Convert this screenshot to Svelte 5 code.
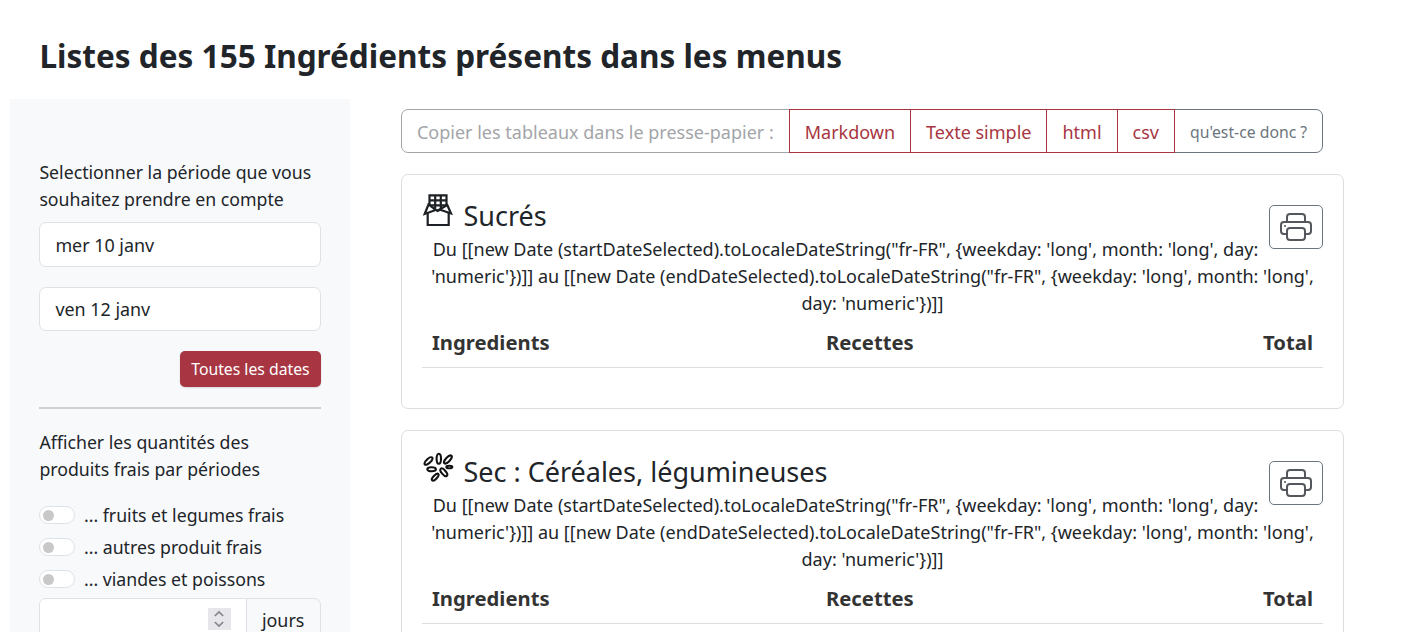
<script>
  const formats = ['Markdown', 'Texte simple', 'html', 'csv'];
  const switches = ['... fruits et legumes frais', '... autres produit frais', '... viandes et poissons'];
  const dates = ['mer 10 janv', 'ven 12 janv'];
  const sections = [
    { title: 'Sucrés', icon: 'chocolate' },
    { title: 'Sec : Céréales, légumineuses', icon: 'grains' }
  ];
  const period =
    `Du [[new Date (startDateSelected).toLocaleDateString("fr-FR", {weekday: 'long', month: 'long', day: 'numeric'})]] au [[new Date (endDateSelected).toLocaleDateString("fr-FR", {weekday: 'long', month: 'long', day: 'numeric'})]]`;
</script>

<div class="page">
  <h1>Listes des 155 Ingrédients présents dans les menus</h1>
  <div class="layout">
    <aside>
      <p class="label">Selectionner la période que vous souhaitez prendre en compte</p>
      {#each dates as date}
        <div class="field">{date}</div>
      {/each}
      <div class="actions"><button class="all">Toutes les dates</button></div>
      <hr />
      <p class="label">Afficher les quantités des<br />produits frais par périodes</p>
      <div class="switches">
        {#each switches as text}
          <div class="switch"><span class="track"></span><span>{text}</span></div>
        {/each}
      </div>
      <div class="days">
        <div class="number">
          <span class="spin">
            <svg width="12" height="18" viewBox="0 0 12 18" fill="none" stroke="#858589" stroke-width="1.7"><path d="M1.800 6 6 2l4.200 4M1.800 12 6 16l4.200-4" /></svg>
          </span>
        </div>
        <div class="unit">jours</div>
      </div>
    </aside>
    <main>
      <div class="group">
        <span class="btn muted">Copier les tableaux dans le presse-papier :</span>
        {#each formats as format}
          <button class="btn red">{format}</button>
        {/each}
        <button class="btn help">qu'est-ce donc ?</button>
      </div>
      {#each sections as section}
        <section class="card">
          <button class="print" aria-label="Imprimer">
            <svg width="32" height="32" viewBox="0 0 16 16" fill="#54585c">
              <path d="M2.500 8a.5.5 0 1 0 0-1 .5.5 0 0 0 0 1z" />
              <path d="M5 1a2 2 0 0 0-2 2v2H2a2 2 0 0 0-2 2v3a2 2 0 0 0 2 2h1v1a2 2 0 0 0 2 2h6a2 2 0 0 0 2-2v-1h1a2 2 0 0 0 2-2V7a2 2 0 0 0-2-2h-1V3a2 2 0 0 0-2-2H5zM4 3a1 1 0 0 1 1-1h6a1 1 0 0 1 1 1v2H4V3zm1 5a2 2 0 0 0-2 2v1H2a1 1 0 0 1-1-1V7a1 1 0 0 1 1-1h12a1 1 0 0 1 1 1v3a1 1 0 0 1-1 1h-1v-1a2 2 0 0 0-2-2H5zm7 2v3a1 1 0 0 1-1 1H5a1 1 0 0 1-1-1v-3a1 1 0 0 1 1-1h6a1 1 0 0 1 1 1z" />
            </svg>
          </button>
          <h2>
            {#if section.icon === 'chocolate'}
              <svg class="icon" width="32" height="36" viewBox="0 0 32 36" fill="none" stroke="#1d2024" stroke-width="2.200">
                <path d="M7.500 13V3.300h17V13M7 8.300h17.500M8 13.300h16M13.200 3.300v13M18.800 3.300v13" />
                <path d="M5.700 21v-3l10-1 11 1v15h-21z" fill="#fff" stroke="none" />
                <path d="M5.700 20.500V33h21V20.500M11 16l4.700 3 5.300-3" />
                <path d="M6.500 12.500 2.700 22l11-4zM25.300 13l3.700 8.500-11.500-4z" fill="#fff" />
              </svg>
            {:else}
              <svg class="icon" width="32" height="36" viewBox="0 0 32 36" fill="none" stroke="#111" stroke-width="2.100">
                <ellipse cx="6.500" cy="13" rx="5" ry="2.100" transform="rotate(-44 6.500 13)" />
                <ellipse cx="16.800" cy="10.700" rx="2.200" ry="5" />
                <ellipse cx="25.900" cy="11.500" rx="5.200" ry="2.100" transform="rotate(-47 25.900 11.500)" />
                <ellipse cx="9.600" cy="21.300" rx="4.300" ry="2" />
                <ellipse cx="27.300" cy="19" rx="3" ry="1.300" />
                <ellipse cx="21.800" cy="24.300" rx="4.700" ry="2.100" transform="rotate(50 21.800 24.300)" />
                <ellipse cx="13.200" cy="29.200" rx="4.400" ry="1.800" transform="rotate(-46 13.200 29.200)" />
              </svg>
            {/if}
            <span>{section.title}</span>
          </h2>
          <p class="period">{period}</p>
          <div class="head"><span>Ingredients</span><span>Recettes</span><span>Total</span></div>
        </section>
      {/each}
    </main>
  </div>
</div>

<style>
  :global(body) { background: #fff; overflow: hidden; }
  * { box-sizing: border-box; }
  .page { height: 632px; overflow: hidden; font: 17.900px/26.900px "Noto Sans", sans-serif; color: #212529; }
  button { font: inherit; margin: 0; }
  h1 { margin: 0; padding: 36px 0 0 39.500px; height: 99px; font-size: 31.520px; line-height: 40px; font-weight: 700; }
  .layout { display: flex; align-items: flex-start; padding-left: 10px; }
  aside { width: 340.400px; height: 760px; flex: none; padding: 60px 29.500px 0 29.400px; background: #f8f9fb; }
  .label { margin: 0 0 9.500px; font-size: 17.720px; }
  .field { height: 44.500px; margin-bottom: 20px; padding: 8.500px 15px; background: #fff; border: 1px solid #dee2e6; border-radius: 7px; }
  .actions { display: flex; justify-content: flex-end; }
  .all { height: 36px; padding: 0 11.300px; font-size: 15.750px; line-height: 36px; color: #fff; background: #a73642; border: 0; border-radius: 5px; box-shadow: 0 1px 2px #0002; }
  hr { height: 2px; margin: 20px 0; border: 0; background: #cfd2d5; }
  hr + .label { position: relative; top: -0.500px; }
  .switches { margin-top: 16px; font-size: 17.720px; }
  .switch { display: flex; align-items: center; gap: 9px; height: 32px; }
  .track { width: 35.500px; height: 18px; background: #fff; border: 1px solid #dee2e6; border-radius: 9px; padding: 2.500px; }
  .track::before { content: ''; display: block; width: 11.500px; height: 11.500px; border-radius: 50%; background: #c8c8c8; }
  .days { display: flex; height: 45px; margin-top: 3px; border: 1px solid #dee2e6; border-radius: 7px; overflow: hidden; }
  .number { flex: 1; display: flex; justify-content: flex-end; align-items: flex-start; padding: 9px 15px 0 0; background: #fff; }
  .spin { display: grid; place-items: center; width: 23px; height: 22px; background: #e7e7eb; }
  .unit { padding: 8px 15.500px 8px 15px; border-left: 1px solid #dee2e6; }
  main { width: 943px; margin-left: 50.600px; padding-top: 10.400px; }
  .group { display: flex; width: max-content; height: 44px; margin-bottom: 20.600px; font-size: 18px; }
  .btn { height: 44px; padding: 0 15px; line-height: 42px; background: #fff; border: 1px solid; white-space: nowrap; }
  .btn + .btn { margin-left: -1px; }
  .muted { padding-top: 1px; color: #a3a5a8; border-radius: 7px 0 0 7px; }
  .red { padding-top: 1px; color: #a73642; position: relative; z-index: 1; }
  .help { padding-top: 1px; font-size: 15.750px; color: #6c757d; border-radius: 0 7px 7px 0; }
  .card { height: 235px; margin-bottom: 21px; padding: 19px 20px; border: 1px solid #dcdee0; border-radius: 7px; }
  .print { float: right; display: grid; place-items: center; width: 54px; height: 44px; margin-top: 11px; padding: 0; background: #fff; border: 1px solid #6c757d; border-radius: 5px; }
  h2 { display: flex; gap: 9.500px; height: 42px; margin: 0; font-size: 26.970px; line-height: 44px; font-weight: 400; }
  .icon { flex: none; margin-top: -2px; }
  .period { margin: 0; text-align: center; font-size: 18.020px; }
  .head { display: grid; grid-template-columns: 394px 1fr auto; height: 51px; padding: 12.200px 10px 0; border-bottom: 1px solid #dcdee0; font-size: 20.250px; line-height: 27px; font-weight: 700; color: #333; }
</style>
